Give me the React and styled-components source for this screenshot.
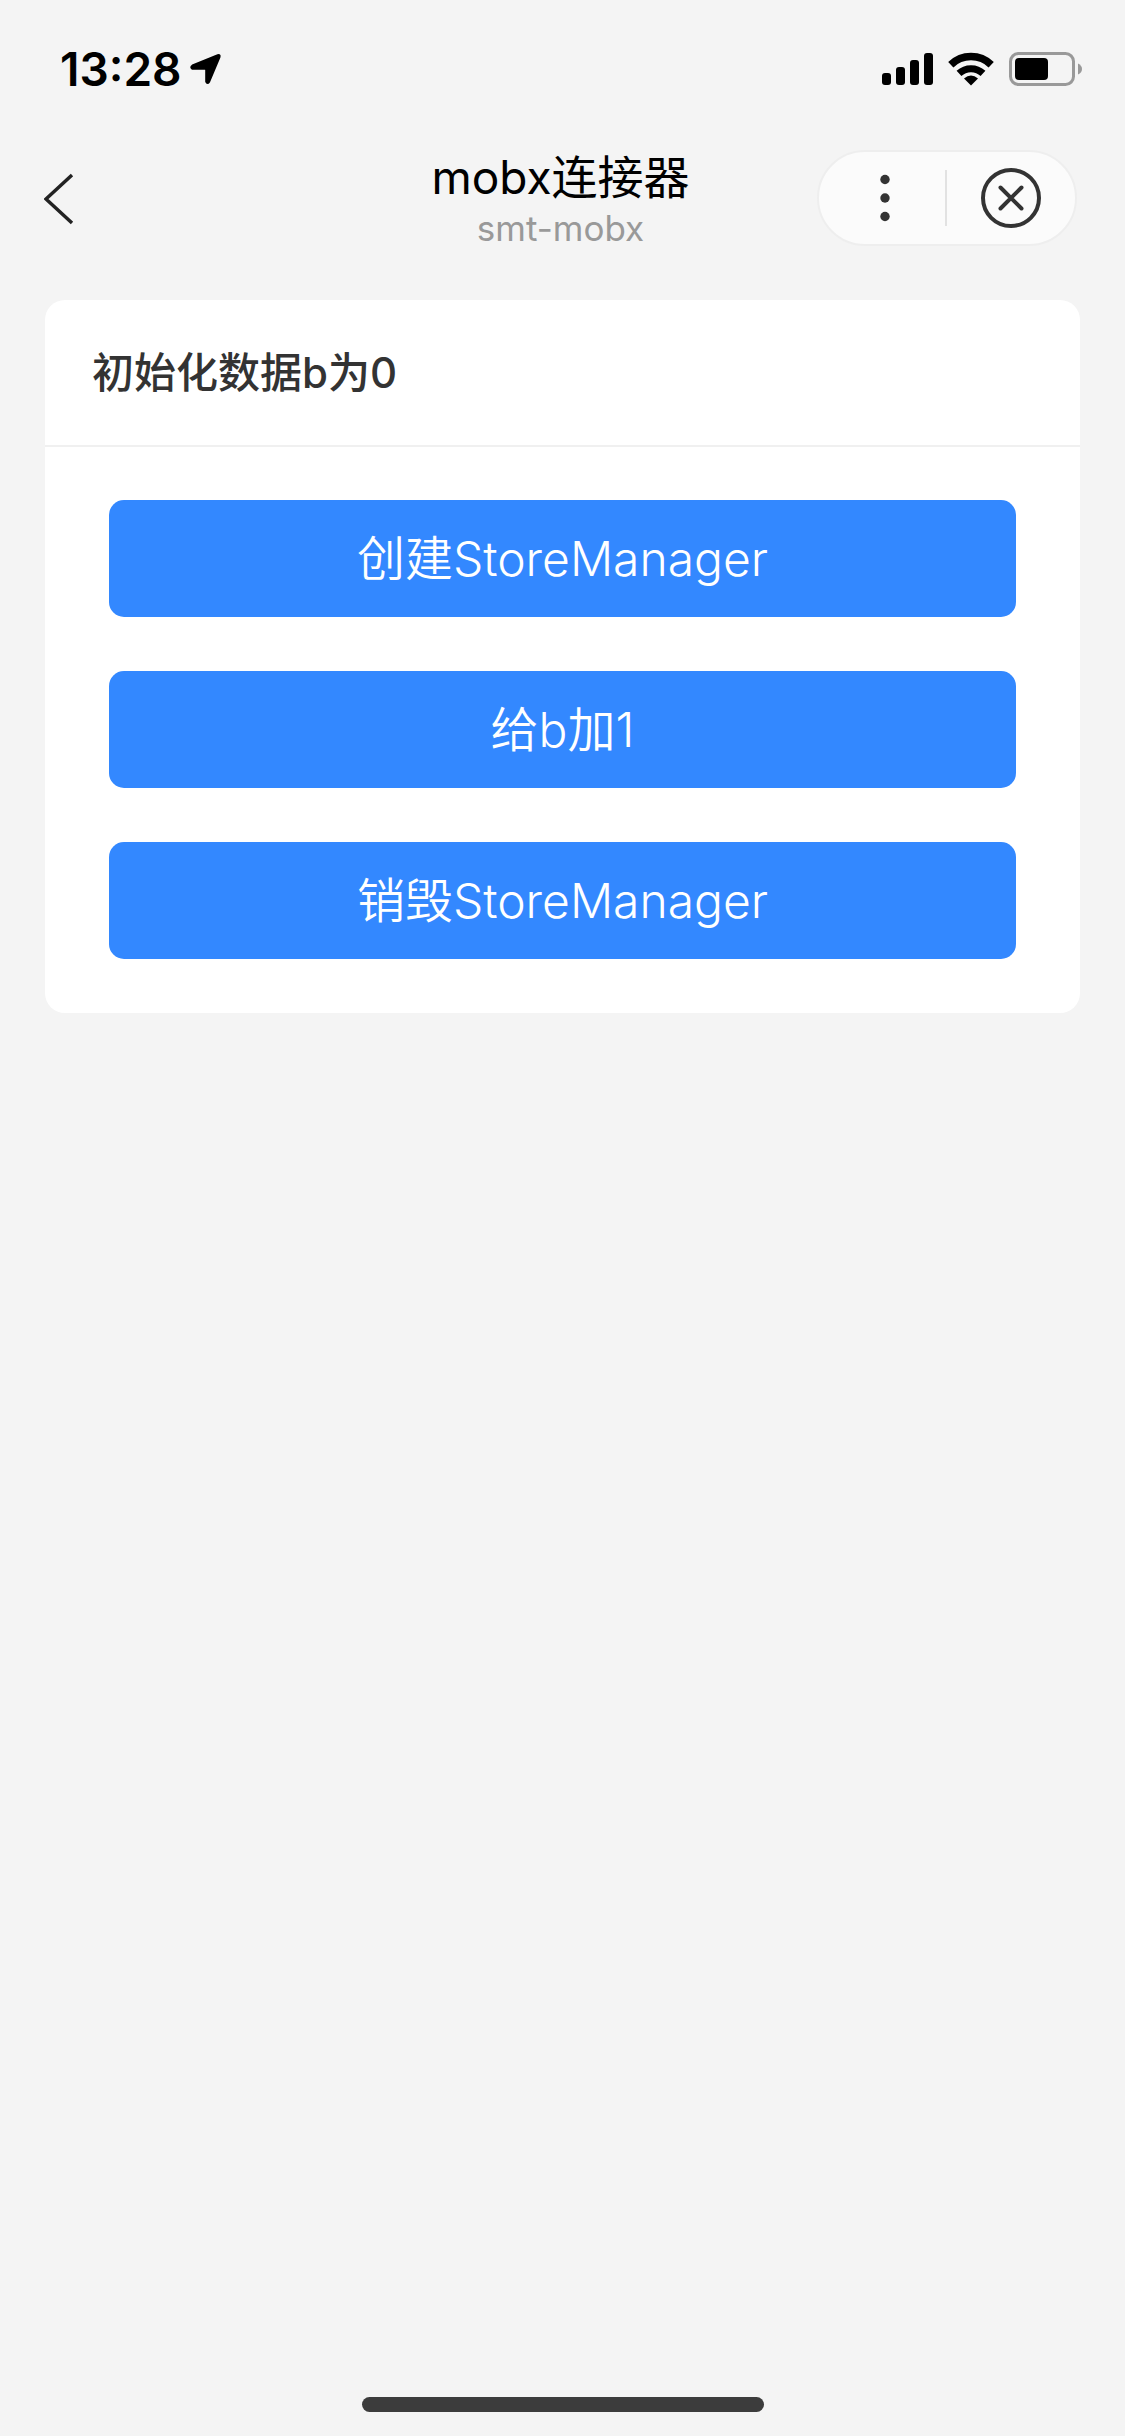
import { useState } from 'react';
import styled, { createGlobalStyle } from 'styled-components';

const GlobalStyle = createGlobalStyle`
  * {
    box-sizing: border-box;
  }

  body {
    margin: 0;
    background: #f4f4f4;
    font-family: Inter, "Noto Sans CJK SC", sans-serif;
  }

  button {
    padding: 0;
    border: none;
    background: none;
    font: inherit;
    color: inherit;
    cursor: pointer;
  }

  svg {
    display: block;
  }
`

const Page = styled.div`
  display: flex;
  flex-direction: column;
  min-height: 100vh;
`

const StatusBar = styled.div`
  display: flex;
  justify-content: space-between;
  align-items: center;
  height: 138px;
  padding: 0 43px 0 60px;
`

const StatusGroup = styled.div`
  display: flex;
  align-items: center;
  gap: ${({ gap }) => gap};
`

const Time = styled.span`
  font-size: 46px;
  font-weight: 600;
  line-height: 52px;
`

const Header = styled.header`
  display: grid;
  grid-template-columns: 1fr auto 1fr;
  align-items: center;
  height: 120px;
  padding: 0 48px 0 44px;
`

const BackButton = styled.button`
  justify-self: start;
`

const Titles = styled.div`
  text-align: center;
`

const Title = styled.h1`
  margin: 0;
  font-size: 46px;
  font-weight: 400;
  line-height: 60px;
  color: #000;
`

const Subtitle = styled.p`
  margin: 0;
  font-size: 35px;
  line-height: 42px;
  color: #999;
`

const Capsule = styled.div`
  justify-self: end;
  display: grid;
  grid-template-columns: 120px 2px 1fr;
  align-items: center;
  width: 260px;
  height: 96px;
  padding-left: 6px;
  border: 2px solid #eee;
  border-radius: 48px;
  background: #fbfbfb;
`

const CapsuleButton = styled.button`
  display: flex;
  justify-content: center;
  align-items: center;
  height: 100%;
`

const CapsuleDivider = styled.span`
  height: 56px;
  background: #e2e2e2;
`

const Card = styled.main`
  margin: 42px 45px 0;
  border-radius: 20px;
  background: #fff;
`

const CardTitle = styled.h2`
  margin: 0;
  padding: 43px 47px 42px;
  border-bottom: 2px solid #f0f0f0;
  font-size: 42px;
  font-weight: 500;
  line-height: 60px;
  color: #333;
`

const CardBody = styled.div`
  display: flex;
  flex-direction: column;
  gap: 54px;
  padding: 53px 64px 54px;
`

const ActionButton = styled.button`
  height: 117px;
  border-radius: 15px;
  background: #38f;
  color: #fff;
  font-size: 48px;
  font-weight: 350;
  line-height: 60px;
`

const HomeIndicator = styled.div`
  width: 402px;
  height: 15px;
  margin: auto auto 24px;
  border-radius: 8px;
  background: #3c3c3c;
`

const LocationIcon = () => (
    <svg width="32" height="32" viewBox="0 0 32 32">
        <path d="M2.500 12.500 27.800 2.200q2.500-.6 1.700 1.800L19.200 28.600q-1.900 3-3 0V17q0-1.200-1.200-1.200H2.500q-2.500-1.600 0-3.300Z" stroke="#000" strokeWidth="2" strokeLinejoin="round" />
    </svg>
)

const SignalIcon = () => (
    <svg width="51" height="34" viewBox="0 0 51 34">
        <rect x="0" y="21" width="9" height="12" rx="3" />
        <rect x="14" y="15" width="9" height="18" rx="3" />
        <rect x="28" y="8" width="9" height="25" rx="3" />
        <rect x="42" y="1" width="9" height="32" rx="3" />
    </svg>
)

const WifiIcon = () => (
    <svg width="46" height="34" viewBox="0 0 46 34">
        <path d="M2.800 12.800a29 29 0 0 1 40.400 0" fill="none" stroke="#000" strokeWidth="7.500" />
        <path d="M11 21.400a17.500 17.500 0 0 1 24 0" fill="none" stroke="#000" strokeWidth="7" />
        <path d="M23 33.500 16 26.600q7-6.200 14 0Z" />
    </svg>
)

const BatteryIcon = () => (
    <svg width="73" height="34" viewBox="0 0 73 34">
        <rect x="1.500" y="1.500" width="63" height="31" rx="8" fill="none" stroke="#999" strokeWidth="3" />
        <rect x="6" y="6" width="33" height="22" rx="4" />
        <path d="M69 11.500q4 2 4 5.500t-4 5.500Z" fill="#999" />
    </svg>
)

const BackIcon = () => (
    <svg width="30" height="54" viewBox="0 0 30 54">
        <path d="M28 4 2 28l26 24" fill="none" stroke="#222" strokeWidth="3.500" />
    </svg>
)

const MoreIcon = () => (
    <svg width="10" height="48" viewBox="0 0 10 48">
        <circle cx="5" cy="5.500" r="4.700" fill="#333" />
        <circle cx="5" cy="24" r="4.700" fill="#333" />
        <circle cx="5" cy="42.500" r="4.700" fill="#333" />
    </svg>
)

const CloseIcon = () => (
    <svg width="60" height="60" viewBox="0 0 60 60" fill="none" stroke="#333" strokeWidth="4" strokeLinecap="round">
        <circle cx="30" cy="30" r="28" />
        <path d="m19.500 19.500 21 21m0-21-21 21" />
    </svg>
)

const App = () => {
    const [b, setB] = useState(0)
    const [created, setCreated] = useState(false)

    const handleAdd = () => {
        if (created) setB(b + 1)
    }

    const handleDestroy = () => {
        setCreated(false)
        setB(0)
    }

    return (
        <Page>
            <GlobalStyle />
            <StatusBar>
                <StatusGroup gap="8px">
                    <Time>13:28</Time>
                    <LocationIcon />
                </StatusGroup>
                <StatusGroup gap="15px">
                    <SignalIcon />
                    <WifiIcon />
                    <BatteryIcon />
                </StatusGroup>
            </StatusBar>
            <Header>
                <BackButton aria-label="返回"><BackIcon /></BackButton>
                <Titles>
                    <Title>mobx连接器</Title>
                    <Subtitle>smt-mobx</Subtitle>
                </Titles>
                <Capsule>
                    <CapsuleButton aria-label="更多"><MoreIcon /></CapsuleButton>
                    <CapsuleDivider />
                    <CapsuleButton aria-label="关闭"><CloseIcon /></CapsuleButton>
                </Capsule>
            </Header>
            <Card>
                <CardTitle>初始化数据b为{b}</CardTitle>
                <CardBody>
                    <ActionButton onClick={() => setCreated(true)}>创建StoreManager</ActionButton>
                    <ActionButton onClick={handleAdd}>给b加1</ActionButton>
                    <ActionButton onClick={handleDestroy}>销毁StoreManager</ActionButton>
                </CardBody>
            </Card>
            <HomeIndicator />
        </Page>
    );
};

export default App;
